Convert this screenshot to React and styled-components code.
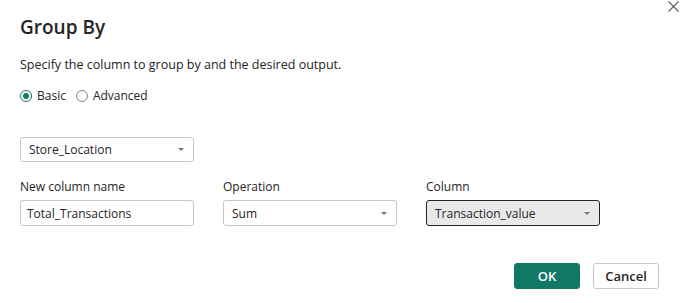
import * as React from "react"
import styled, { createGlobalStyle } from 'styled-components';

// styles
const Global = createGlobalStyle`
  body{
    margin:0;
    background:#fff;
    font-family:"Open Sans","Noto Sans",sans-serif;
    color:#252423;
  }
`
const Dialog = styled.div`
  position:relative;
  width:688px;
  height:303px;
  box-sizing:border-box;
  padding:14px 20px 0 20px;
`
const Close = styled.button`
  position:absolute;
  top:1px;
  left:668px;
  width:11px;
  height:11px;
  padding:0;
  border:none;
  background:none;
  svg{ display:block; }
`
const Title = styled.h1`
  margin:0;
  font-size:19px;
  font-weight:600;
  line-height:26px;
  color:#252423;
`
const Subtitle = styled.p`
  margin:16px 0 0 0;
  font-size:12.5px;
  line-height:18px;
`
const RadioRow = styled.div`
  display:flex;
  align-items:center;
  gap:10px;
  margin-top:14px;
  font-size:12px;
  line-height:16px;
`
const RadioLabel = styled.label`
  display:flex;
  align-items:center;
  gap:5px;
`
const RadioDot = styled.span`
  width:12px;
  height:12px;
  box-sizing:border-box;
  border-radius:50%;
  border:1px solid ${p => p.$on ? '#117865' : '#8a8886'};
  display:flex;
  align-items:center;
  justify-content:center;
  &:after{
    content:"";
    width:6px;
    height:6px;
    border-radius:50%;
    background:${p => p.$on ? '#117865' : 'transparent'};
  }
`
const Select = styled.div`
  width:174px;
  height:${p => p.$tall ? '26px' : '25px'};
  box-sizing:border-box;
  border:1px solid ${p => p.$focus ? '#252423' : '#c8c6c4'};
  border-radius:3px;
  background:${p => p.$focus ? '#e9e9e9' : '#fff'};
  display:flex;
  align-items:center;
  justify-content:space-between;
  padding:0 9px 0 8px;
  font-size:12px;
  color:#252423;
`
const Caret = styled.span`
  width:0;
  height:0;
  border-left:3px solid transparent;
  border-right:3px solid transparent;
  border-top:3px solid #797775;
`
const KeySelect = styled.div`
  margin-top:33px;
`
const Fields = styled.div`
  display:flex;
  gap:29px;
  margin-top:17px;
`
const Field = styled.div`
  display:flex;
  flex-direction:column;
  gap:5px;
`
const FieldLabel = styled.span`
  font-size:12px;
  line-height:16px;
`
const Input = styled.div`
  width:174px;
  height:26px;
  box-sizing:border-box;
  border:1px solid #c8c6c4;
  border-radius:3px;
  display:flex;
  align-items:center;
  padding:0 8px 0 6px;
  font-size:12px;
  color:#252423;
`
const Footer = styled.div`
  display:flex;
  justify-content:flex-end;
  gap:13px;
  margin-top:37px;
  padding-right:9px;
`
const Button = styled.button`
  width:66px;
  height:26px;
  box-sizing:border-box;
  border-radius:3px;
  font-family:inherit;
  font-size:13px;
  font-weight:600;
  border:1px solid ${p => p.$primary ? '#117865' : '#c8c6c4'};
  background:${p => p.$primary ? '#117865' : '#fff'};
  color:${p => p.$primary ? '#fff' : '#252423'};
  padding:0;
`

const App = () => {
  return (
    <Dialog>
      <Global />
      <Close aria-label="Close">
        <svg width="11" height="11" viewBox="0 0 11 11">
          <path d="M0.5 0.5 L10.5 10.5 M10.5 0.5 L0.5 10.5" stroke="#605e5c" strokeWidth="1.1" />
        </svg>
      </Close>
      <Title>Group By</Title>
      <Subtitle>Specify the column to group by and the desired output.</Subtitle>
      <RadioRow>
        <RadioLabel><RadioDot $on />Basic</RadioLabel>
        <RadioLabel><RadioDot />Advanced</RadioLabel>
      </RadioRow>
      <KeySelect>
        <Select>Store_Location<Caret /></Select>
      </KeySelect>
      <Fields>
        <Field>
          <FieldLabel>New column name</FieldLabel>
          <Input>Total_Transactions</Input>
        </Field>
        <Field>
          <FieldLabel>Operation</FieldLabel>
          <Select $tall>Sum<Caret /></Select>
        </Field>
        <Field>
          <FieldLabel>Column</FieldLabel>
          <Select $tall $focus>Transaction_value<Caret /></Select>
        </Field>
      </Fields>
      <Footer>
        <Button $primary>OK</Button>
        <Button>Cancel</Button>
      </Footer>
    </Dialog>
  )
}

export default App
